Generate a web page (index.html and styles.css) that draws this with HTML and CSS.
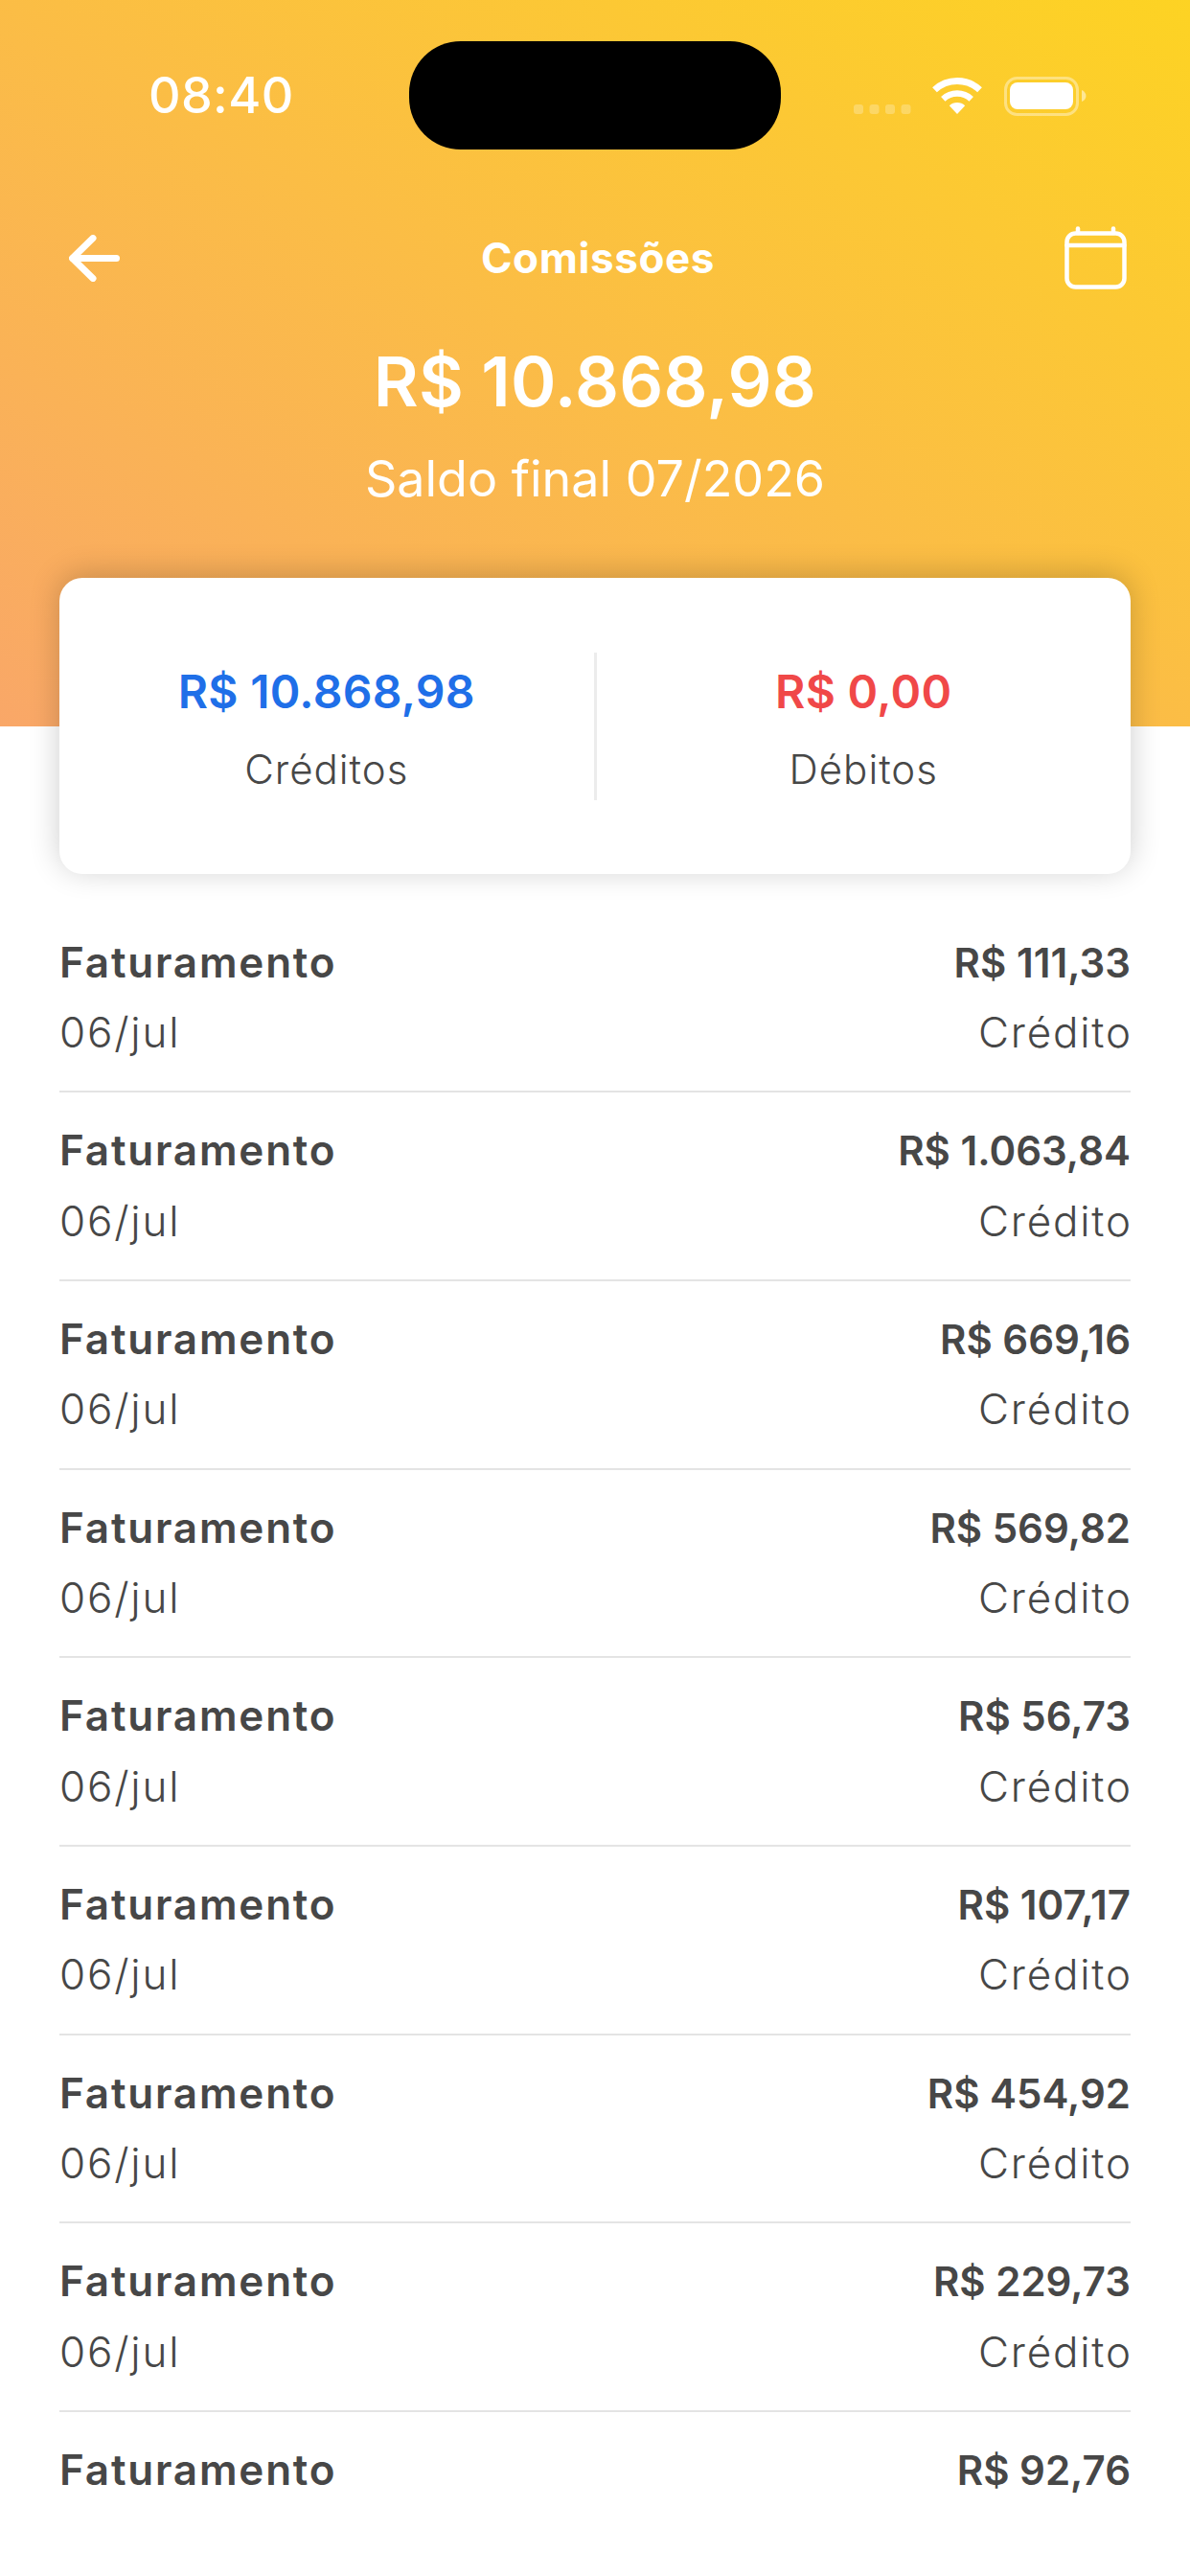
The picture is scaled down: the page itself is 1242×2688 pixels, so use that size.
FILE: index.html
```html
<!DOCTYPE html>
<html lang="pt-BR">
<head>
    <meta charset="UTF-8">
    <meta name="viewport" content="width=device-width, initial-scale=1.0">
    <title>Comissões</title>
    <link rel="stylesheet" href="styles.css">
</head>
<body>

    <header class="header">
        <div class="status">
            <span class="time">08:40</span>
            <div class="island"></div>
            <svg class="status-icons" width="244" height="41" viewBox="0 0 244 41">
                <g fill="#fff" opacity="0.25">
                    <rect x="1" y="29" width="10" height="10" rx="3"/>
                    <rect x="17.5" y="29" width="10" height="10" rx="3"/>
                    <rect x="34" y="29" width="10" height="10" rx="3"/>
                    <rect x="50.5" y="29" width="10" height="10" rx="3"/>
                </g>
                <g fill="none" stroke="#fff">
                    <path d="M85.5 13.8A34.5 34.5 0 0 1 132.5 13.8" stroke-width="7"/>
                    <path d="M94.3 23.3A21.5 21.5 0 0 1 123.7 23.3" stroke-width="6.5"/>
                </g>
                <path d="M109 39L100.8 30.2A12 12 0 0 1 117.2 30.2Z" fill="#fff"/>
                <rect x="159.5" y="1.5" width="75" height="38" rx="12" fill="none" stroke="#fff" stroke-width="3" opacity="0.4"/>
                <rect x="164" y="6" width="66" height="28" rx="8" fill="#fff"/>
                <path d="M239 14C242 15 243.500 18 243.500 20S242 25 239 26Z" fill="#fff" opacity="0.5"/>
            </svg>
        </div>

        <div class="nav">
            <svg class="back" width="53" height="49" viewBox="0 0 53 49" fill="none" stroke="#fff" stroke-width="7" stroke-linecap="round" stroke-linejoin="round">
                <path d="M49.500 24.500H4"/>
                <path d="M25 3.500L3.500 24.500L25 45.500"/>
            </svg>
            <h1 class="title">Comissões</h1>
            <svg class="calendar" width="65" height="66" viewBox="0 0 65 66" fill="none" stroke="#fff" stroke-width="4.500" stroke-linecap="round">
                <rect x="2.500" y="7.500" width="60" height="56" rx="9"/>
                <path d="M2.500 20H62.500"/>
                <path d="M14 2.500V7"/>
                <path d="M51 2.500V7"/>
            </svg>
        </div>

        <div class="balance">R$ 10.868,98</div>
        <div class="balance-label">Saldo final 07/2026</div>
    </header>

    <section class="summary">
        <div class="summary-col">
            <div class="summary-value credit">R$ 10.868,98</div>
            <div class="summary-label">Créditos</div>
        </div>
        <div class="summary-divider"></div>
        <div class="summary-col">
            <div class="summary-value debit">R$ 0,00</div>
            <div class="summary-label">Débitos</div>
        </div>
    </section>

    <main class="list">
        <div class="row">
            <div class="row-line"><span class="row-name">Faturamento</span><span class="row-amount">R$ 111,33</span></div>
            <div class="row-line"><span class="row-sub">06/jul</span><span class="row-sub">Crédito</span></div>
        </div>
        <div class="row">
            <div class="row-line"><span class="row-name">Faturamento</span><span class="row-amount">R$ 1.063,84</span></div>
            <div class="row-line"><span class="row-sub">06/jul</span><span class="row-sub">Crédito</span></div>
        </div>
        <div class="row">
            <div class="row-line"><span class="row-name">Faturamento</span><span class="row-amount">R$ 669,16</span></div>
            <div class="row-line"><span class="row-sub">06/jul</span><span class="row-sub">Crédito</span></div>
        </div>
        <div class="row">
            <div class="row-line"><span class="row-name">Faturamento</span><span class="row-amount">R$ 569,82</span></div>
            <div class="row-line"><span class="row-sub">06/jul</span><span class="row-sub">Crédito</span></div>
        </div>
        <div class="row">
            <div class="row-line"><span class="row-name">Faturamento</span><span class="row-amount">R$ 56,73</span></div>
            <div class="row-line"><span class="row-sub">06/jul</span><span class="row-sub">Crédito</span></div>
        </div>
        <div class="row">
            <div class="row-line"><span class="row-name">Faturamento</span><span class="row-amount">R$ 107,17</span></div>
            <div class="row-line"><span class="row-sub">06/jul</span><span class="row-sub">Crédito</span></div>
        </div>
        <div class="row">
            <div class="row-line"><span class="row-name">Faturamento</span><span class="row-amount">R$ 454,92</span></div>
            <div class="row-line"><span class="row-sub">06/jul</span><span class="row-sub">Crédito</span></div>
        </div>
        <div class="row">
            <div class="row-line"><span class="row-name">Faturamento</span><span class="row-amount">R$ 229,73</span></div>
            <div class="row-line"><span class="row-sub">06/jul</span><span class="row-sub">Crédito</span></div>
        </div>
        <div class="row row-last">
            <div class="row-line"><span class="row-name">Faturamento</span><span class="row-amount">R$ 92,76</span></div>
        </div>
    </main>

</body>
</html>
```

FILE: styles.css
```css
html, body {
    margin: 0;
    padding: 0;
}

body {
    width: 1242px;
    height: 2688px;
    overflow: hidden;
    background-color: #fff;
    color: #474747;
    font-family: Inter, "Noto Sans", sans-serif;
}

.header {
    height: 758px;
    background: linear-gradient(to bottom left, #fdd323, #f9a768);
    color: #fff;
    text-align: center;
}

.status {
    display: flex;
    align-items: center;
    height: 113px;
    padding-top: 43px;
}

.time {
    width: 272px;
    padding-left: 155px;
    text-align: left;
    font-size: 52px;
    font-weight: 500;
    letter-spacing: 0.4px;
}

.island {
    width: 388px;
    height: 113px;
    border-radius: 54px;
    background-color: #000;
}

.status-icons {
    margin-left: 75px;
    margin-top: 1px;
}

.nav {
    display: grid;
    grid-template-columns: 1fr auto 1fr;
    align-items: center;
    height: 66px;
    margin-top: 80px;
    padding: 0 66px 0 72px;
}

.back {
    justify-self: start;
}

.calendar {
    justify-self: end;
}

.title {
    margin: 0;
    font-size: 44px;
    font-weight: 700;
    letter-spacing: 0.6px;
}

.balance {
    margin-top: 46px;
    font-size: 72px;
    line-height: 100px;
    font-weight: 600;
    letter-spacing: 0.2px;
}

.balance-label {
    margin-top: 17px;
    font-size: 52px;
    line-height: 70px;
}

.summary {
    display: flex;
    box-sizing: border-box;
    height: 309px;
    margin: -155px 62px 0;
    padding-top: 78px;
    border-radius: 24px;
    background-color: #fff;
    box-shadow: 0 -4px 32px rgba(0, 0, 0, 0.2);
    position: relative;
}

.summary-col {
    flex: 1;
    text-align: center;
}

.summary-divider {
    width: 3px;
    height: 154px;
    background-color: #ececec;
}

.summary-value {
    font-size: 48px;
    line-height: 82px;
    font-weight: 600;
    letter-spacing: 0.3px;
}

.credit {
    color: #1f6fe8;
}

.debit {
    color: #f04848;
}

.summary-label {
    font-size: 42px;
    line-height: 79px;
    font-weight: 300;
    letter-spacing: 1px;
}

.list {
    margin: 31.5px 62px 0;
}

.row {
    padding: 24px 0 23.7px;
    border-bottom: 2px solid #e4e4e4;
}

.row-last {
    border-bottom: none;
}

.row-line {
    display: flex;
    justify-content: space-between;
    line-height: 73.5px;
}

.row-name {
    font-size: 44px;
    font-weight: 600;
    letter-spacing: 1.8px;
}

.row-amount {
    font-size: 42px;
    font-weight: 600;
}

.row-sub {
    font-size: 44px;
    font-weight: 300;
    letter-spacing: 1.8px;
}

.row-sub:last-child {
    margin-right: -1.8px;
}
```
